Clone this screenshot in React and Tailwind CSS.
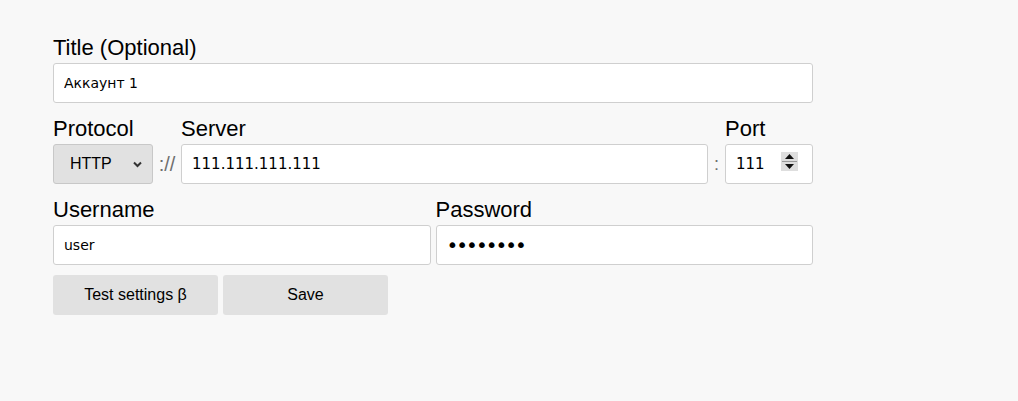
import React from 'react';

const Label = ({ children }) => (
    <label className="block text-[22px] leading-[25px] text-black mb-[3px] whitespace-nowrap">{children}</label>
);

const inputCls = "block w-full h-10 px-[10px] bg-white border border-[#cfcfcf] rounded-[3px] text-black outline-none font-['DejaVu_Sans',Verdana,sans-serif]";

const App = () => {
    return (
        <div className="min-h-[401px] bg-[#f8f8f8] pt-[35px] pl-[53px] font-['Liberation_Sans',Arial,sans-serif]">
            <div className="w-[760px]">
                {/* Title */}
                <div>
                    <Label>Title (Optional)</Label>
                    <input className={inputCls + " text-[14px]"} defaultValue="Аккаунт 1" />
                </div>

                {/* Protocol / Server / Port */}
                <div className="flex items-end mt-[13px]">
                    <div className="w-[100px] shrink-0">
                        <Label>Protocol</Label>
                        <div className="relative h-10 bg-[#e1e1e1] border border-[#c8c8c8] rounded-[3px] flex items-center pl-[16px]">
                            <span className="text-[16px] text-black">HTTP</span>
                            <svg className="absolute right-[10px] top-[16px]" width="9" height="7" viewBox="0 0 9 7">
                                <path d="M1 1.5 L4.5 5 L8 1.5" fill="none" stroke="#333" strokeWidth="2" />
                            </svg>
                        </div>
                    </div>
                    <span className="w-[28px] shrink-0 h-10 flex items-center justify-center text-[20px] text-[#6f6f6f]">://</span>
                    <div className="flex-1">
                        <Label>Server</Label>
                        <input className={inputCls + " text-[15px]"} defaultValue="111.111.111.111" />
                    </div>
                    <span className="w-[17px] shrink-0 h-10 flex items-center justify-center text-[18px] text-[#6f6f6f]">:</span>
                    <div className="w-[88px] shrink-0">
                        <Label>Port</Label>
                        <div className="relative">
                            <input className={inputCls + " text-[15px]"} defaultValue="111" />
                            <div className="absolute right-[15px] top-[8px] w-[17px] h-[19px] bg-[#dedede] flex flex-col items-center justify-center gap-[2px]">
                                <svg width="9" height="5" viewBox="0 0 9 5"><path d="M0 5 L4.5 0 L9 5 Z" fill="#111" /></svg>
                                <div className="w-[15px] h-px bg-[#9a9a9a]" />
                                <svg width="9" height="5" viewBox="0 0 9 5"><path d="M0 0 L4.5 5 L9 0 Z" fill="#111" /></svg>
                            </div>
                        </div>
                    </div>
                </div>

                {/* Username / Password */}
                <div className="grid grid-cols-2 gap-[5px] mt-[13px]">
                    <div>
                        <Label>Username</Label>
                        <input className={inputCls + " text-[14px]"} defaultValue="user" />
                    </div>
                    <div>
                        <Label>Password</Label>
                        <input type="password" className={inputCls + " text-[20px] tracking-[-2px]"} defaultValue="12345678" />
                    </div>
                </div>

                {/* Buttons */}
                <div className="flex gap-[5px] mt-[10px]">
                    <button className="w-[165px] h-10 bg-[#e1e1e1] rounded-[3px] text-[16px] text-black">Test settings β</button>
                    <button className="w-[165px] h-10 bg-[#e1e1e1] rounded-[3px] text-[16px] text-black">Save</button>
                </div>
            </div>
        </div>
    );
};

export default App;
